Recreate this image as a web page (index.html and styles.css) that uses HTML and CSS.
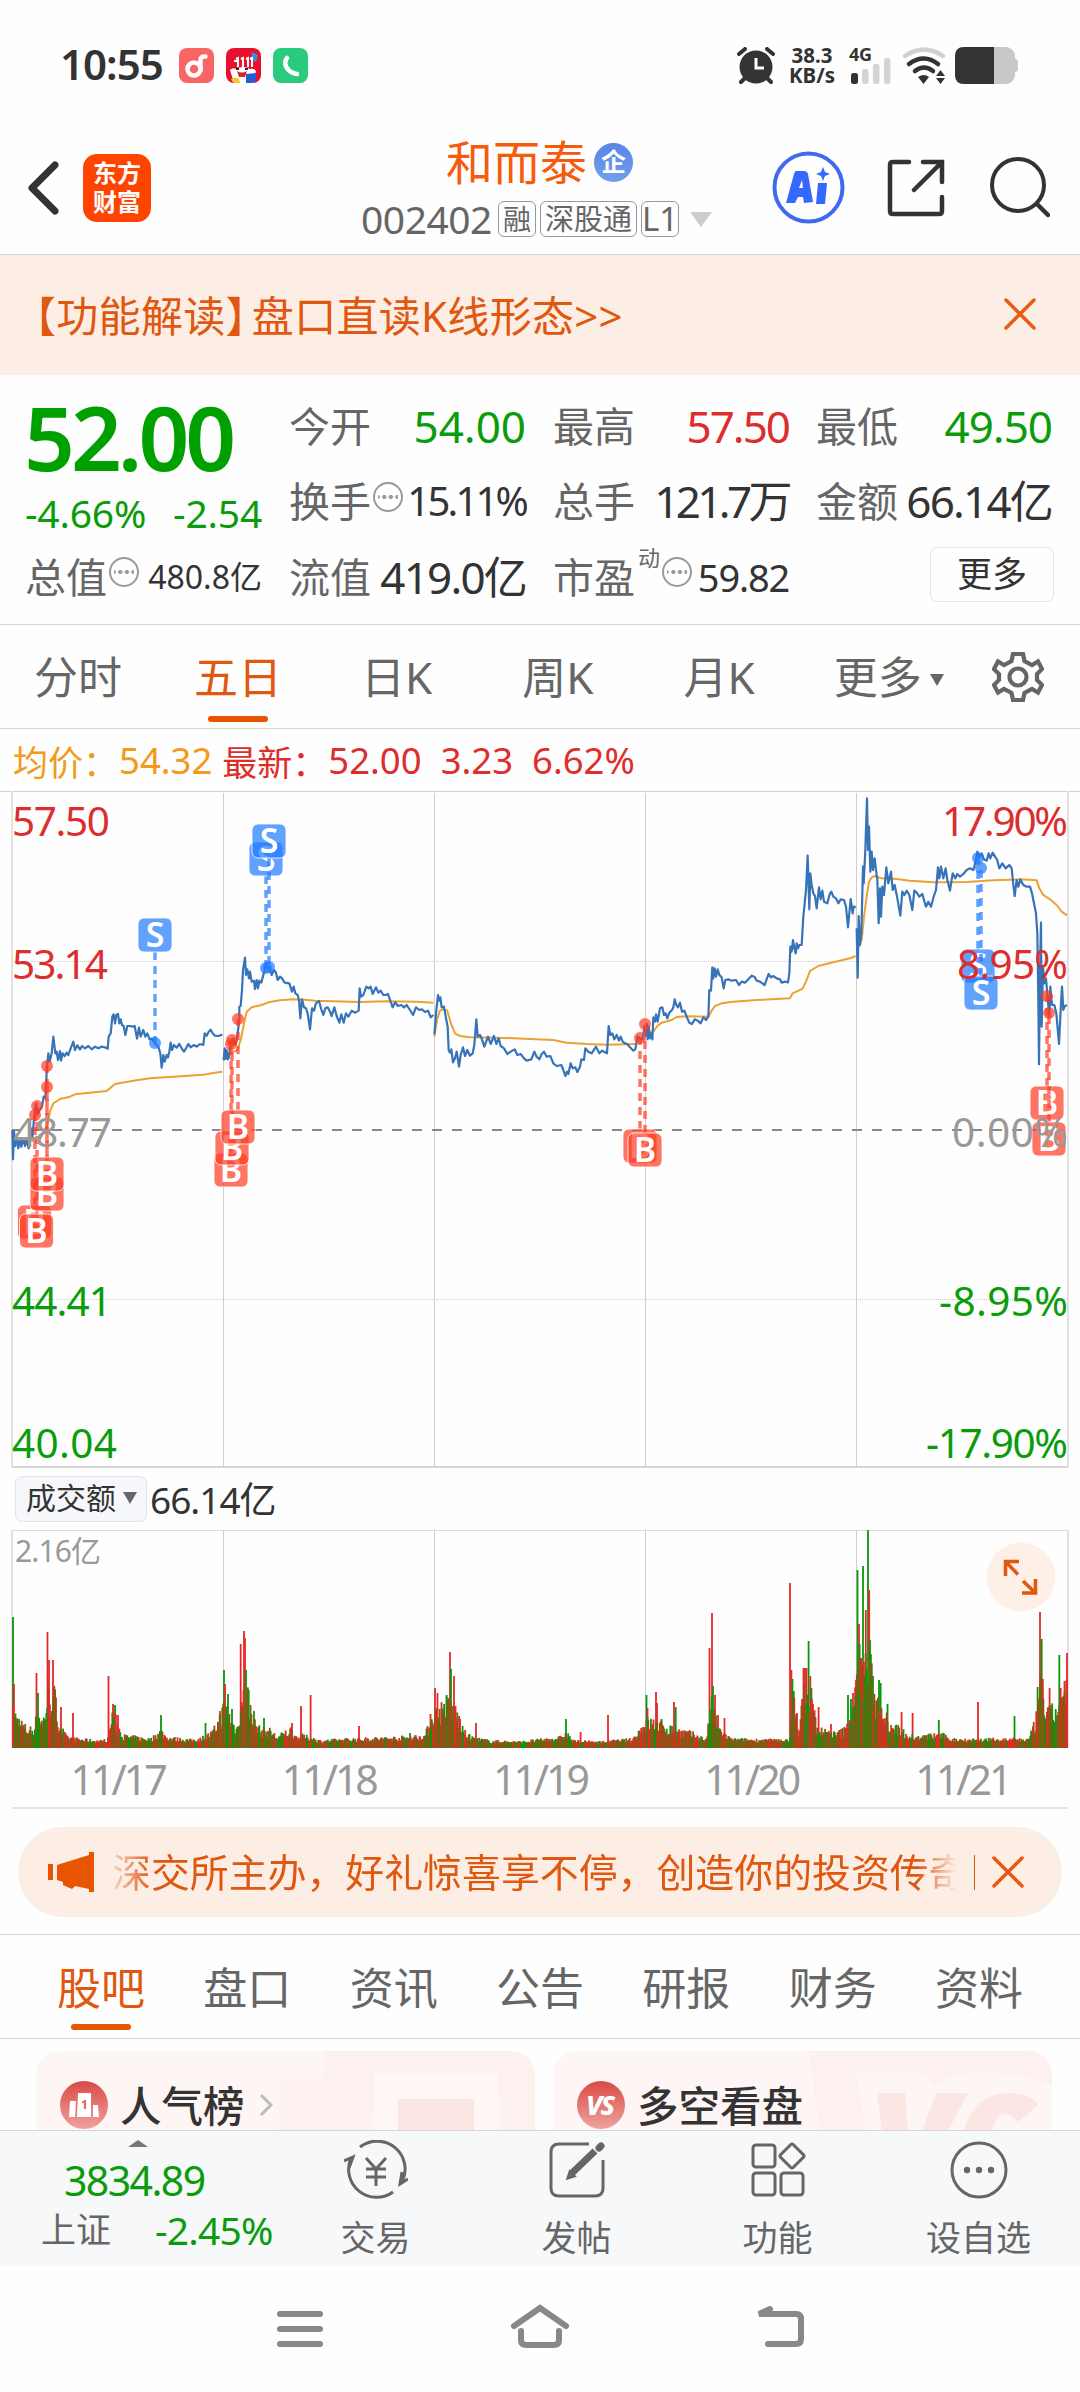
FILE: index.html
```html
<!DOCTYPE html>
<html lang="zh-CN">
<head>
    <meta charset="UTF-8">
    <meta name="viewport" content="width=device-width, initial-scale=1.0">
    <title>和而泰 002402</title>
    <link rel="stylesheet" href="styles.css">
</head>
<body>
    <div class="status">
        <span class="clock">10:55</span>
        <svg class="app" viewBox="0 0 35 35"><rect width="35" height="35" rx="8" fill="#f96465"/><circle cx="15" cy="21" r="6.500" fill="none" stroke="#fff" stroke-width="4.500"/><path d="M21.500 22V12q0-4 5-3.500" fill="none" stroke="#fff" stroke-width="4.500" stroke-linecap="round"/></svg>
        <svg class="app" viewBox="0 0 35 35"><rect width="35" height="35" rx="8" fill="#e8112d"/><path d="M26 4l6 3-2 7-5-2z" fill="#3c8bdc"/><path d="M10 11l2-1v9M15 11l2-1v9M20 11l2-1v9M24 11l2-1v9M8 13h3" stroke="#fff" stroke-width="2" fill="none"/><path d="M4 22q3-3 6-1 7-4 14 0 4-1 6 2l-3 12H8z" fill="#fff"/><path d="M11 23q5 3 10 0l-2 6h-6z" fill="#d5232c"/><path d="M10 21h3M19 21h3" stroke="#333" stroke-width="2"/><path d="M5 31q5-3 8 0l1 4H9q-3-1-4-4z" fill="#f7c72c"/><path d="M20 26l10-1v8l-4 2h-6z" fill="#1f60d6"/></svg>
        <svg class="app" viewBox="0 0 35 35"><rect width="35" height="35" rx="8" fill="#2bcb7e"/><path d="M14 10c-4 5-1 14 10 16" fill="none" stroke="#fff" stroke-width="4.500" stroke-linecap="round"/></svg>
        <svg class="alarm" viewBox="0 0 38 37"><circle cx="19" cy="20" r="16.500" fill="#333"/><path d="M2 7l6-5M36 7l-6-5M4 35l5-5M34 35l-5-5" stroke="#333" stroke-width="4" stroke-linecap="round"/><path d="M19 11v10h8" stroke="#fff" stroke-width="3" fill="none"/></svg>
        <div class="speed"><b>38.3</b><b>KB/s</b></div>
        <svg class="signal" viewBox="0 0 43 37"><text x="0" y="14" font-size="18" font-weight="bold" fill="#333" textLength="23">4G</text><rect x="2" y="26" width="7" height="11" rx="2.500" fill="#333"/><g fill="#d4d4d4"><rect x="13" y="22" width="6.500" height="15" rx="2.500"/><rect x="24" y="17" width="6.500" height="20" rx="2.500"/><rect x="35" y="11" width="6.500" height="26" rx="2.500"/></g></svg>
        <svg class="wifi" viewBox="0 0 44 37"><g fill="none" stroke-width="4.500" stroke-linecap="round"><path d="M3 9q19-13 38 0" stroke="#d0d0d0"/><path d="M7 17q15-11 29 0M13 24q9-7 18 0" stroke="#333"/></g><path d="M16 30q6-4 11 0l-5.500 7zM34 29l4.500-6 4.500 6zM34 31h9l-4.500 6z" fill="#333"/></svg>
        <svg class="battery" viewBox="0 0 63 37"><path d="M60 12q3 0 3 4v6q0 3-3 3z" fill="#c8c8c8"/><rect width="60" height="37" rx="9" fill="#c8c8c8"/><path d="M9 0h30v37H9q-9 0-9-9V9q0-9 9-9z" fill="#333"/></svg>
    </div>

    <div class="header">
        <svg class="back" viewBox="0 0 32 54"><path d="M28 4L5 27l23 23" fill="none" stroke="#333" stroke-width="7" stroke-linecap="round" stroke-linejoin="round"/></svg>
        <div class="logo">东方<br>财富</div>
        <div class="title">
            <div class="name">和而泰<span class="qi">企</span></div>
            <div class="code">002402<span class="tag">融</span><span class="tag wide">深股通</span><span class="tag l1">L1</span><i class="tri"></i></div>
        </div>
        <svg class="ai" viewBox="0 0 73 73"><circle cx="36.500" cy="36.500" r="34" fill="none" stroke="#4169f0" stroke-width="4"/><path fill-rule="evenodd" d="M24 20h8q3 0 4 3l5 28-9 1-1-6h-5l-3 6h-9l8-29q1-3 2-3zM27 37h4l-1-8zM46 32h9l-2 21h-9zM51 16l2 5 5 2-5 2-2 5-2-5-5-2 5-2z" fill="#3568ff"/></svg>
        <svg class="share" viewBox="0 0 58 58"><path d="M22 3H6Q3 3 3 6v46q0 3 3 3h46q3 0 3-3V38M36 3h19v20M55 3L27 31" fill="none" stroke="#333" stroke-width="4.500" stroke-linecap="round"/></svg>
        <svg class="search" viewBox="0 0 60 62"><circle cx="28" cy="28" r="26" fill="none" stroke="#333" stroke-width="4"/><path d="M47 47l11 11" stroke="#333" stroke-width="4.500" stroke-linecap="round"/></svg>
    </div>

    <div class="banner">
        <span class="banner-text">【功能解读<span class="rb">】</span>盘口直读K线形态&gt;&gt;</span>
        <svg class="close" viewBox="0 0 32 32"><path d="M2 2l28 28M30 2L2 30"/></svg>
    </div>

    <div class="quote">
        <div class="now">
            <div class="price">52.00</div>
            <div class="change green"><span>-4.66%</span><span>-2.54</span></div>
        </div>
        <div class="cell"><label>今开</label><span class="green">54.00</span></div>
        <div class="cell"><label>最高</label><span class="red high">57.50</span></div>
        <div class="cell"><label>最低</label><span class="green low">49.50</span></div>
        <div class="cell"><label>换手<i class="more"></i></label><span class="s40">15.11%</span></div>
        <div class="cell"><label>总手</label><span class="hand">121.7万</span></div>
        <div class="cell"><label>金额</label><span class="tight">66.14亿</span></div>
        <div class="cell"><label>总值<i class="more"></i></label><span class="s32">480.8亿</span></div>
        <div class="cell"><label>流值</label><span class="tight">419.0亿</span></div>
        <div class="cell"><label>市盈<sup>动</sup><i class="more"></i></label><span class="s38">59.82</span></div>
        <div class="cell"><span class="btn">更多</span></div>
    </div>

    <div class="tabs">
        <span>分时</span><span class="on">五日</span><span class="wide">日K</span><span class="wide">周K</span><span>月K</span><span class="drop">更多<i class="tri dark"></i></span>
        <svg class="gear" viewBox="-26 -26 52 52"><path d="M-5-23H5l1.500 7L14-12l6-3.500 4 7.500-5 5v6l5 5-4 7.500-6-3.500-7.500 4L5 23H-5l-1.500-7-7.500-4-6 3.500-4-7.500 5-5v-6l-5-5 4-7.500 6 3.500 7.500-4z"/><circle r="8.500"/></svg>
    </div>

    <div class="legend"><span class="avg">均价：</span><b class="avg n1">54.32</b><span>最新：</span><b class="n2">52.00</b><b class="n3">3.23</b><b>6.62%</b></div>

    <svg class="chart" viewBox="0 791 1080 677">
        <g class="grid">
            <path d="M0 791.500H1080" stroke="#d0d0d0"/>
            <path d="M12 791V1467M1068 791V1467" stroke="#e2e2e2" stroke-width="2"/>
            <path d="M223.500 793V1467M434.500 793V1467M645.500 793V1467M856.500 793V1467" stroke="#cfcfcf"/>
            <path d="M12 1467H1068" stroke="#d5d5d5" stroke-width="2"/>
            <path d="M12 961.500H1068M12 1299.500H1068" stroke="#ccc" stroke-dasharray="1 1"/>
            <path d="M12 1130H1064" stroke="#888" stroke-width="2" stroke-dasharray="10 10"/>
        </g>
        <!-- 11/17, 11/18 -->
        <g transform="translate(0 770) scale(.33333)">
            <polyline class="ma" points="37,1110 100,1112 118,1110 130,1090 143,1060 150,1025 160,1000 180,987 210,980 225,973 320,963 345,942 400,932 450,925 520,920 610,914 640,909 667,905"/>
            <polyline class="ma" points="671,873 676,855 690,850 712,840 722,810 732,760 740,725 755,712 785,705 805,697 840,691 880,688 915,689 945,692 1080,696 1160,694 1250,695 1300,698"/>
            <polyline class="px" points="37,1080 39,1168 42,1085 46,1128 50,1100 55,1135 60,1110 64,1130 70,1105 75,1128 80,1110 86,1135 92,1075 97,1100 103,1040 108,1000 115,1030 120,1018 126,1010 131,980 136,985 141,888 145,850 149,875 155,850 160,800 166,850 170,845 174,870 180,843 183,872 188,850 194,858 200,848 205,855 212,835 220,815 225,840 232,826 240,838 246,828 255,835 265,828 275,838 285,830 295,835 305,830 315,832 323,836 326,800 332,790 337,740 341,733 345,760 349,735 354,732 358,760 362,748 366,765 371,768 376,795 382,768 390,768 397,770 404,768 411,806 417,773 422,800 430,780 436,800 442,790 449,808 456,806 465,820 475,830 481,850 485,893 490,855 494,875 500,855 504,862 508,845 512,818 516,840 522,825 530,833 538,822 545,835 552,845 558,835 565,822 572,832 582,825 590,830 600,822 610,825 614,790 620,797 626,785 632,779 638,790 645,797 655,798 667,794"/>
            <polyline class="px" points="671,870 674,835 677,866 680,840 683,868 686,865 692,818 700,805 706,825 712,800 718,748 718,710 722,708 726,660 729,600 735,563 738,615 742,598 747,625 750,605 755,635 762,632 765,657 770,630 774,655 778,632 784,638 790,615 797,590 808,592 815,615 822,600 828,608 833,630 840,620 846,625 854,638 868,640 876,665 881,650 886,670 893,675 897,690 901,745 906,688 912,712 918,715 923,730 930,778 936,715 942,722 948,700 957,693 963,715 970,735 976,715 983,712 990,725 995,738 1003,712 1010,738 1018,758 1024,733 1031,758 1038,730 1045,740 1055,722 1066,728 1076,722 1079,655 1083,680 1090,675 1099,650 1106,655 1112,650 1118,672 1128,652 1135,668 1142,662 1150,675 1157,675 1164,672 1170,690 1178,712 1186,697 1194,708 1204,705 1212,712 1220,705 1230,720 1239,735 1248,712 1258,720 1266,718 1275,726 1284,722 1292,742 1300,735"/>
        </g>
        <!-- 11/19, 11/20 -->
        <g transform="translate(420 770) scale(.33333)">
            <polyline class="ma" points="43,800 52,745 60,722 70,718 82,722 92,758 105,790 120,798 150,802 230,803 330,807 400,810 440,818 500,822 560,824 650,822"/>
            <polyline class="ma" points="677,790 700,785 712,768 725,758 755,750 770,741 800,739 865,740 875,722 885,708 905,700 940,695 1010,690 1110,685 1118,670 1148,656 1158,635 1170,603 1195,588 1240,577 1290,565 1307,558"/>
            <polyline class="px" points="43,793 48,730 54,675 57,692 61,682 65,712 72,710 78,745 83,770 86,840 90,848 94,838 99,877 105,865 110,845 117,890 122,855 129,832 135,858 142,840 150,857 158,850 163,825 169,748 173,800 180,795 186,808 193,830 204,800 212,822 222,798 229,822 236,805 242,828 252,835 262,852 272,845 284,838 292,855 302,852 312,865 320,872 334,868 343,845 350,860 358,868 365,852 372,845 380,860 391,858 400,880 410,888 424,885 430,900 436,918 441,905 445,912 452,880 458,895 466,892 472,906 480,890 484,868 492,870 496,835 505,845 515,850 528,830 538,850 546,842 561,850 566,768 571,795 577,790 583,808 590,795 597,812 602,800 608,815 615,820 622,822 630,832 640,842 646,838 653,800 660,805 668,808 674,765"/>
            <polyline class="px" points="677,800 681,762 683,808 686,770 690,805 694,790 697,808 700,742 705,755 708,733 713,755 720,715 727,712 732,735 737,730 742,745 748,728 756,720 760,712 764,688 769,705 774,712 780,698 786,725 793,722 802,745 808,758 816,762 824,748 833,752 842,760 850,742 858,750 865,740 868,660 873,662 877,592 880,625 884,595 888,620 893,598 898,615 905,622 911,655 916,630 925,628 935,632 948,630 957,645 965,635 975,638 985,628 995,617 1003,620 1010,632 1020,635 1034,645 1046,612 1053,622 1060,618 1070,625 1080,628 1085,638 1095,635 1104,637 1108,610 1111,530 1115,545 1119,510 1123,535 1127,550 1130,520 1134,535 1138,525 1145,525 1150,440 1158,360 1163,257 1168,418 1171,310 1175,345 1180,370 1185,378 1190,415 1197,352 1202,388 1207,362 1212,395 1222,400 1230,370 1234,365 1240,380 1248,385 1255,400 1262,388 1272,390 1278,410 1284,472 1292,387 1298,430 1301,410 1307,412"/>
        </g>
        <!-- 11/21 -->
        <g transform="translate(760 770) scale(.33333)">
            <polyline class="ma" points="291,540 305,510 312,440 320,380 327,335 335,322 345,318 365,325 410,327 450,332 520,337 620,336 700,331 780,328 830,331 838,355 850,375 870,388 890,405 905,425 921,436"/>
            <polyline class="px" points="290,475 293,623 296,438 300,525 304,490 309,290 311,340 316,240 321,85 324,240 327,170 331,305 335,245 339,300 344,265 348,300 352,330 356,460 360,355 363,440 367,350 372,375 379,292 385,340 393,305 398,360 404,345 412,385 421,437 427,365 433,375 440,362 448,375 457,420 463,362 470,368 478,380 487,372 492,390 498,410 505,395 513,410 521,380 528,360 534,292 538,325 543,290 550,325 557,295 562,330 570,362 578,310 586,325 592,312 600,320 610,312 620,300 630,295 640,300 648,270 652,245 658,262 665,250 672,268 680,272 686,250 691,265 698,248 705,260 711,268 718,295 727,280 737,295 748,285 755,295 760,345 764,378 770,330 775,350 781,328 790,345 800,350 810,350 816,370 822,400 828,430 832,490 835,690 837,883 840,600 843,458 845,770 849,590 853,640 858,625 861,660 868,740 871,650 876,705 883,705 889,730 897,822 902,720 906,650 910,720 914,708 921,706"/>
        </g>
        <g id="marks"></g>
        <g class="axis">
            <text class="up" x="12" y="836" textLength="98">57.50</text>
            <text class="up" x="12" y="979" textLength="96">53.14</text>
            <text class="flat" x="13" y="1147" textLength="99">48.77</text>
            <text class="down" x="12" y="1316" textLength="100">44.41</text>
            <text class="down" x="12" y="1458" textLength="105">40.04</text>
            <text class="up" x="942" y="836" textLength="126">17.90%</text>
            <text class="up" x="957" y="979" textLength="111">8.95%</text>
            <text class="flat" x="952" y="1147" textLength="116">0.00%</text>
            <text class="down" x="939" y="1316" textLength="129">-8.95%</text>
            <text class="down" x="926" y="1458" textLength="142">-17.90%</text>
        </g>
    </svg>

    <div class="vol-head"><span class="pill">成交额<i class="tri dark"></i></span><span class="amount">66.14亿</span></div>

    <div class="vol">
        <svg viewBox="0 1530 1080 219">
            <g class="grid">
                <path d="M12 1530.500H1068" stroke="#ddd"/>
                <path d="M12 1530V1748M1068 1530V1748" stroke="#e2e2e2" stroke-width="2"/>
                <path d="M223.500 1530V1748M434.500 1530V1748M645.500 1530V1748M856.500 1530V1748" stroke="#cfcfcf"/>
            </g>
            <text class="flat" x="15" y="1562" font-size="30" textLength="86">2.16亿</text>
            <g id="bars"></g>
        </svg>
        <svg class="expand" viewBox="0 0 70 70"><circle cx="35" cy="35" r="34.500" fill="#fef0e7"/><path d="M33 19.500H19.500V34M19.500 19.500l12.500 13M36 51h13.500V37M49.500 51L37 39" fill="none" stroke="#e0570f" stroke-width="3.500"/></svg>
    </div>

    <div class="dates"><span>11/17</span><span>11/18</span><span>11/19</span><span>11/20</span><span>11/21</span></div>

    <div class="ticker">
        <svg class="horn" viewBox="0 0 46 40"><path d="M0 12h5v16H0zM9 13L41 3V0h5v40h-5v-3l-14-3-3 3-9-4v-3l-6-2z" fill="#e85500"/></svg>
        <span class="ticker-text">深交所主办，好礼惊喜享不停，创造你的投资传奇</span>
        <i class="bar"></i>
        <svg class="close" viewBox="0 0 32 32"><path d="M2 2l28 28M30 2L2 30"/></svg>
    </div>

    <div class="subtabs">
        <span class="on">股吧</span><span>盘口</span><span>资讯</span><span>公告</span><span>研报</span><span>财务</span><span>资料</span>
    </div>

    <div class="cards">
        <div class="card">
            <svg class="deco" viewBox="0 0 260 80"><path d="M50 0H260v80H4V29h44z" fill="#fdf1ef"/><path d="M100 22H223l3 58H97z" fill="#fef7f5"/><path d="M123 48h76v32h-76z" fill="#fbe6e4"/></svg>
            <svg class="ico" viewBox="0 0 48 48"><circle cx="24" cy="24" r="24" fill="url(#rd)"/><path d="M10 20h6l-1 16H9zM18 12h13v24H17zM33 24h5l1 12h-6z" fill="#fff"/><text x="21" y="28" font-size="12" font-weight="bold" fill="#e2605a">1</text></svg>
            <span>人气榜</span>
            <svg class="chev" viewBox="0 0 14 24"><path d="M2 2l10 10L2 22" fill="none" stroke="#bbb" stroke-width="3"/></svg>
        </div>
        <div class="card">
            <svg class="deco" viewBox="0 0 260 80"><path d="M17 0H260v80H28z" fill="#fdf1ef"/><path d="M64 22h70l8 12q40-26 118 0v46H74z" fill="#fef6f4"/><path d="M85 42h28l3 38H90zM130 80l14-38h32l-20 38zM172 80q10-38 45-38 22 0 29 12l-20 17q-18-20-26 9z" fill="#fbe6e4"/></svg>
            <svg class="ico" viewBox="0 0 48 48"><circle cx="24" cy="24" r="24" fill="url(#rd)"/><text x="9" y="34" font-size="27" font-weight="800" font-style="italic" fill="#fff" textLength="29">VS</text></svg>
            <span>多空看盘</span>
        </div>
    </div>
    <svg class="defs" width="0" height="0"><linearGradient id="rd" x2="0" y2="1"><stop stop-color="#d94b46"/><stop offset="1" stop-color="#f0a29d"/></linearGradient></svg>

    <div class="bottom">
        <div class="index">
            <i class="up-tri"></i>
            <div class="point green">3834.89</div>
            <div class="pct"><span>上证</span><span class="green">-2.45%</span></div>
        </div>
        <div class="item">
            <svg viewBox="-32 -30 64 60"><path d="M-16-23A28 28 0 0 1 26 12M17 22A28 28 0 0 1-25-12M-32-9l9-4-4 11M32 9l-8 5 2-12M-10-12L0-1l10-11M0-1v17M-10-1h20M-10 7h20"/></svg>
            <span>交易</span>
        </div>
        <div class="item">
            <svg viewBox="-32 -30 64 60"><path d="M12-26H-18q-8 0-8 8v36q0 8 8 8h36q8 0 8-8V-10"/><path d="M-6 4l24-23" stroke-width="7"/><path d="M22-22l2-2" stroke-width="7" stroke-linecap="round"/><path d="M-9 8l2-6 4 4z"/></svg>
            <span>发帖</span>
        </div>
        <div class="item">
            <svg viewBox="-32 -30 64 60"><rect x="-25" y="-25" width="22" height="22" rx="3"/><rect x="-25" y="3" width="22" height="22" rx="3"/><rect x="3" y="3" width="22" height="22" rx="3"/><rect x="5" y="-23" width="18" height="18" rx="2" transform="rotate(45 14 -14)"/></svg>
            <span>功能</span>
        </div>
        <div class="item">
            <svg viewBox="-32 -30 64 60"><circle r="27"/><g fill="#666" stroke="none"><circle cx="-12" r="3.200"/><circle r="3.200"/><circle cx="12" r="3.200"/></g></svg>
            <span>设自选</span>
        </div>
    </div>

    <div class="sysnav">
        <svg viewBox="-32 -30 64 60"><path d="M-20-15h40M-20 0h40M-20 15h40"/></svg>
        <svg viewBox="-32 -30 64 60"><path d="M-26-3L0-21 26-3M-19 2v9q0 5 5 5h28q5 0 5-5V2"/></svg>
        <svg viewBox="-32 -30 64 60"><path d="M-10-20l-11 5h37q5 0 5 5v20q0 5-5 5h-28"/></svg>
    </div>

    <script src="script.js"></script>
</body>
</html>
```
FILE: styles.css
```css
body {
    margin: 0;
    width: 1080px;
    height: 2392px;
    overflow: hidden;
    background: #fefefe;
    color: #333;
    font-family: "Noto Sans", "Noto Sans CJK SC", sans-serif;
}
svg {
    display: block;
    flex: none;
}
i {
    font-style: normal;
}
.green {
    color: #0a9c0a;
}
.red {
    color: #dd2d2d;
}
.tri {
    display: inline-block;
    border: 11px solid transparent;
    border-top: 15px solid #ccc;
    border-bottom: 0;
}
.tri.dark {
    border-width: 12px 7.5px 0;
    border-top-color: #666;
}

/* status bar */
.status {
    display: flex;
    align-items: center;
    height: 110px;
    padding: 20px 0 0 60px;
    box-sizing: border-box;
}
.clock {
    width: 119px;
    font-size: 42px;
    font-weight: 600;
    letter-spacing: -1px;
    line-height: 40px;
    padding-bottom: 2px;
}
.app {
    width: 35px;
    height: 35px;
    margin-right: 12px;
}
.alarm {
    width: 38px;
    height: 37px;
    margin-left: 417px;
}
.speed {
    display: flex;
    flex-direction: column;
    width: 48px;
    margin-left: 13px;
    font-size: 20.5px;
    line-height: 20px;
    text-align: center;
}
.signal {
    width: 43px;
    height: 37px;
    margin-left: 13px;
    overflow: visible;
}
.wifi {
    width: 44px;
    height: 37px;
    margin-left: 10px;
}
.battery {
    width: 63px;
    height: 37px;
    margin-left: 9px;
}

/* header */
.header {
    display: flex;
    align-items: center;
    height: 145px;
    padding: 11px 28px 0 27px;
    box-sizing: border-box;
    border-bottom: 1px solid #d5d5d5;
}
.header .back {
    width: 32px;
    height: 54px;
}
.logo {
    width: 68px;
    height: 68px;
    margin-left: 24px;
    padding-top: 4px;
    box-sizing: border-box;
    border-radius: 14px;
    background: #ff4400;
    color: #fff;
    font-size: 24px;
    font-weight: bold;
    line-height: 29px;
    text-align: center;
}
.title {
    flex: 1;
    display: flex;
    flex-direction: column;
    align-items: center;
    padding: 7px 0 0 152px;
}
.name {
    display: flex;
    align-items: center;
    height: 56px;
    padding-left: 4px;
    font-size: 47px;
    line-height: 56px;
    color: #f75a0b;
}
.qi {
    width: 39px;
    height: 39px;
    margin-left: 7px;
    border-radius: 50%;
    background: linear-gradient(#5a85e6, #719eea);
    color: #fff;
    font-size: 25px;
    font-weight: bold;
    line-height: 37px;
    text-align: center;
}
.code {
    display: flex;
    align-items: center;
    height: 58px;
    margin-left: -2px;
    font-size: 39px;
    line-height: 58px;
    letter-spacing: -0.5px;
    color: #666;
}
.tag {
    width: 36px;
    height: 34px;
    margin-left: 6px;
    border: 1px solid #999;
    border-radius: 6px;
    font-size: 28px;
    line-height: 34px;
    letter-spacing: 0;
    text-align: center;
}
.tag.wide {
    width: 95px;
    margin-left: 4px;
    font-size: 29px;
}
.tag.l1 {
    margin-left: 4px;
    font-size: 33px;
}
.code .tri {
    margin-left: 11px;
}
.ai {
    width: 73px;
    height: 73px;
    margin-right: 41px;
}
.share {
    width: 60px;
    height: 58px;
    margin-right: 44px;
}
.search {
    width: 60px;
    height: 62px;
    margin-right: 2px;
}

/* banner */
.banner {
    display: flex;
    align-items: center;
    justify-content: space-between;
    height: 120px;
    padding: 0 44px 3px 14px;
    box-sizing: border-box;
    background: #fceee4;
    color: #e0570f;
    font-size: 42px;
    letter-spacing: 0.3px;
}
.rb {
    margin-right: -16px;
}
.close {
    width: 32px;
    height: 32px;
    fill: none;
    stroke: #e85a10;
    stroke-width: 3.5;
    stroke-linecap: round;
}

/* quote */
.quote {
    display: grid;
    grid-template-columns: 237px 237px 236px 236px;
    grid-template-rows: repeat(3, 75.5px);
    column-gap: 27px;
    height: 250px;
    padding: 13px 26px 0 25px;
    box-sizing: border-box;
    border-bottom: 1px solid #d5d5d5;
    font-size: 44px;
}
.now {
    grid-row: span 2;
}
.price {
    height: 98px;
    margin-left: -1px;
    font-size: 89px;
    font-weight: 600;
    line-height: 98px;
    letter-spacing: -4px;
    color: #00a000;
}
.change {
    display: flex;
    justify-content: space-between;
    font-size: 39px;
    letter-spacing: -0.2px;
    line-height: 54px;
}
.cell {
    display: flex;
    align-items: center;
    justify-content: space-between;
    white-space: nowrap;
    line-height: 60px;
}
.cell label {
    display: flex;
    align-items: center;
    font-size: 41px;
    color: #666;
}
.cell sup {
    margin: -40px 0 0 3px;
    font-size: 22px;
    line-height: 24px;
}
.cell .more {
    width: 26px;
    height: 26px;
    margin: -9px 0 0 2px;
    border: 2px solid #999;
    border-radius: 50%;
    background: radial-gradient(circle, #999 1.8px, transparent 2.4px) 3px 0 / 6.6px 26px content-box;
    padding: 0 3px;
    box-sizing: border-box;
    width: 30px;
    height: 30px;
}
.high {
    letter-spacing: -2px;
}
.low {
    letter-spacing: -1px;
}
.s40 {
    font-size: 40px;
    letter-spacing: -2.8px;
}
.s38 {
    font-size: 38px;
    letter-spacing: -1.2px;
}
.s32 {
    font-size: 32px;
}
.tight {
    letter-spacing: -1.8px;
}
.hand {
    letter-spacing: -3.6px;
}
.btn {
    width: 122px;
    height: 53px;
    margin: -5px -2px 0 auto;
    border: 1px solid #e3e3e3;
    border-radius: 7px;
    font-size: 35px;
    line-height: 52px;
    text-align: center;
}

/* period tabs */
.tabs {
    display: flex;
    align-items: center;
    height: 104px;
    padding: 0 36px 0 34px;
    box-sizing: border-box;
    border-bottom: 1px solid #d5d5d5;
    color: #666;
    font-size: 44px;
    line-height: 102px;
}
.tabs > span {
    position: relative;
    margin-right: 72px;
}
.tabs > .on {
    margin-right: 79px;
}
.tabs > .wide {
    margin-right: 90px;
}
.tabs > .drop {
    margin: 0 auto 0 7px;
}
.drop .tri {
    margin-left: 8px;
    vertical-align: 8px;
}
.on,
.tabs .on {
    color: #e0570f;
}
.on::after {
    content: "";
    position: absolute;
    left: 50%;
    bottom: 6px;
    width: 60px;
    height: 6px;
    margin-left: -30px;
    border-radius: 3px;
    background: #e85500;
}
.gear {
    width: 52px;
    height: 52px;
    fill: none;
    stroke: #666;
    stroke-width: 4.2;
}

/* chart */
.legend {
    display: flex;
    align-items: center;
    height: 62px;
    padding: 0 0 0 13px;
    box-sizing: border-box;
    color: #dd2d2d;
    font-size: 35px;
    white-space: pre;
}
.legend b {
    font-size: 36.5px;
    font-weight: normal;
}
.legend .avg {
    color: #f29a1a;
}
.legend .n1 {
    margin-left: 1px;
    margin-right: 10px;
}
.legend .n2 {
    margin-left: 1px;
}
.legend .n2,
.legend .n3 {
    margin-right: 19px;
}
.chart {
    width: 1080px;
    height: 677px;
}
.ma,
.px {
    fill: none;
    stroke: #eca132;
    stroke-width: 6;
    stroke-linejoin: round;
}
.px {
    stroke: #3673b8;
    stroke-width: 6.6;
}
.axis {
    font-size: 40.5px;
}
.up {
    fill: #dd2d2d;
}
.down {
    fill: #0a9c0a;
}
.flat {
    fill: #999;
}

/* volume */
.vol-head {
    display: flex;
    align-items: center;
    height: 62px;
    padding-left: 15px;
}
.pill {
    display: flex;
    align-items: center;
    width: 132px;
    height: 46px;
    padding-left: 10px;
    box-sizing: border-box;
    border: 1px solid #e2e4e8;
    border-radius: 7px;
    background: #f6f7fa;
    font-size: 30px;
    line-height: 42px;
    padding-bottom: 3px;
}
.pill .tri {
    margin-left: 7px;
}
.amount {
    margin: -2px 0 0 3px;
    font-size: 37px;
    letter-spacing: -1px;
}
.vol {
    position: relative;
    height: 219px;
}
.expand {
    position: absolute;
    left: 986px;
    top: 12px;
    width: 70px;
    height: 70px;
}
.dates {
    display: grid;
    grid-template-columns: repeat(5, 1fr);
    height: 58px;
    margin: 0 12px;
    border-bottom: 2px solid #e2e2e2;
    color: #999;
    font-size: 41px;
    line-height: 60px;
    letter-spacing: -3px;
    text-align: center;
}

/* ticker */
.ticker {
    display: flex;
    align-items: center;
    height: 90px;
    margin: 18px 18px 17px;
    padding-left: 30px;
    box-sizing: border-box;
    border-radius: 45px;
    background: #fceee4;
    color: #e0570f;
}
.horn {
    width: 46px;
    height: 40px;
}
.ticker-text {
    width: 845px;
    margin: -5px 0 0 18px;
    overflow: hidden;
    white-space: nowrap;
    font-size: 38.9px;
    -webkit-mask-image: linear-gradient(90deg, rgba(0, 0, 0, 0.15), #000 40px, #000 805px, transparent);
    mask-image: linear-gradient(90deg, rgba(0, 0, 0, 0.15), #000 40px, #000 805px, transparent);
}
.bar {
    width: 1px;
    height: 35px;
    margin: 0 17px;
    background: #e0570f;
}

/* section tabs */
.subtabs {
    display: flex;
    justify-content: space-between;
    height: 105px;
    padding: 0 57px;
    box-sizing: border-box;
    border-top: 1px solid #d2d5d8;
    border-bottom: 1px solid #d2d5d8;
    color: #666;
    font-size: 44px;
    line-height: 106px;
}
.subtabs span {
    position: relative;
}
.subtabs .on::after {
    bottom: 8px;
}

/* cards */
.cards {
    display: flex;
    gap: 18px;
    height: 91px;
    padding: 12px 28px 0 36px;
    box-sizing: border-box;
    overflow: hidden;
}
.card {
    position: relative;
    display: flex;
    align-items: center;
    width: 499px;
    height: 150px;
    padding: 0 0 42px 24px;
    box-sizing: border-box;
    border-radius: 24px;
    background: #fef6f4;
    font-size: 41.5px;
    font-weight: 500;
}
.card span {
    position: relative;
    z-index: 1;
    margin: -3px 0 0 12px;
}
.ico {
    width: 48px;
    height: 48px;
}
.chev {
    width: 14px;
    height: 24px;
    margin-left: 14px;
    z-index: 1;
}
.deco {
    position: absolute;
    right: 0;
    top: 0;
    width: 260px;
    height: 80px;
    border-top-right-radius: 24px;
}
.defs {
    position: absolute;
}

/* bottom bar */
.bottom {
    display: flex;
    height: 136px;
    box-sizing: border-box;
    border-top: 1px solid #d2d8dc;
    background: #f6f8fa;
    color: #666;
}
.index {
    width: 275px;
}
.up-tri {
    display: block;
    width: 0;
    margin: 9px 0 0 128px;
    border: 10.5px solid transparent;
    border-bottom: 7px solid #777;
    border-top: 0;
}
.point {
    padding-left: 64px;
    height: 58px;
    font-size: 41px;
    line-height: 66px;
    letter-spacing: -1.6px;
}
.pct {
    display: flex;
    padding-left: 41px;
    font-size: 35px;
    line-height: 49px;
}
.pct .green {
    margin-left: 44px;
    font-size: 39px;
    letter-spacing: -0.8px;
}
.item {
    width: 201px;
    display: flex;
    flex-direction: column;
    align-items: center;
    padding-top: 9px;
    font-size: 35px;
}
.item svg {
    width: 64px;
    height: 60px;
    fill: none;
    stroke: #666;
    stroke-width: 3;
}
.item span {
    margin-top: 13px;
    line-height: 50px;
}

/* system navigation */
.sysnav {
    display: flex;
    justify-content: center;
    gap: 176px;
    padding-top: 33px;
}
.sysnav svg {
    width: 64px;
    height: 60px;
    fill: none;
    stroke: #888;
    stroke-width: 6;
    stroke-linecap: round;
}
```
FILE: script.js
```js
// buy / sell marks: type, dot x, dot y, badge centre x, badge centre y
const marks = [
    ['B', 35, 1115, 34.5, 1222],
    ['B', 37, 1106, 36.5, 1231],
    ['B', 47, 1087, 47, 1194],
    ['B', 47, 1066, 47, 1174],
    ['S', 155, 1043, 155, 935],
    ['S', 266, 968, 266, 859],
    ['S', 269, 967, 269, 841],
    ['B', 231, 1044, 231, 1170],
    ['B', 232, 1040, 232, 1148],
    ['B', 238, 1019, 238, 1127],
    ['B', 640, 1038, 640, 1146],
    ['B', 645, 1024, 645, 1150],
    ['S', 978, 858, 978, 966],
    ['S', 981, 868, 981, 993],
    ['B', 1047, 996, 1047, 1103],
    ['B', 1049, 1013, 1049, 1139]
];
document.getElementById('marks').innerHTML = marks.map(([t, x, y, bx, by]) => {
    const c = t === 'B' ? '#ff3b22' : '#1f7bff';
    const edge = by > y ? by - 17 : by + 17;
    return `<path d="M${x} ${edge}V${y}" stroke="${c}" stroke-opacity=".7" stroke-width="3.5" stroke-dasharray="8 6"/>
        <circle cx="${x}" cy="${y}" r="6" fill="${c}" fill-opacity=".7"/>
        <rect x="${bx - 17}" y="${by - 17}" width="34" height="34" rx="6" fill="${c}" fill-opacity=".7" stroke="#fff" stroke-opacity=".8"/>
        <text x="${bx}" y="${by + 12}" font-size="34" font-weight="600" text-anchor="middle" fill="#fff">${t}</text>`;
}).join('');

// volume: base level by x, then single bars
const base = [12,40,20,28,26,20,33,20,37,40,42,28,47,60,54,60,57,30,62,18,66,10,78,8,100,6,107,8,112,40,118,22,122,12,135,10,150,8,160,18,166,10,190,7,200,9,212,16,220,36,224,50,230,30,236,20,240,50,246,70,252,30,260,18,270,18,276,10,290,20,296,10,302,12,320,6,345,8,400,10,424,12,432,36,440,45,448,50,456,40,462,18,470,10,490,6,520,5,560,10,566,15,572,6,600,5,632,8,638,18,646,30,660,25,672,20,690,15,705,8,711,50,717,20,730,8,780,7,789,8,793,50,798,20,803,60,812,50,816,20,835,14,845,20,852,45,857,80,864,100,870,90,874,55,882,50,888,28,900,18,915,10,940,14,950,8,1010,8,1028,8,1035,30,1041,80,1045,40,1050,40,1058,45,1062,60,1068,70];
const peaks = 'g13,131 r14,64 r36.5,75 g38,55 r47.5,116 r49,88 r53,88 g54,61 r61,41 r73,35 r108.5,72 r113,44 g115,43 r118,33 g161,33 g205.5,25 r220,37 g224,78 r225,64 g228,54 g232,39 r240.7,104 r244,117 r245,110 g246,78 g248,50 g254,37 g264,30 r292,25 r301,42 r310.6,53 r359,22 g410,15 r430.5,34 r435,60 r437.5,55 g446.6,53 r450,96 g451,79 r454,72 r460,29 r476,25 g566,29 r580.6,16 r608,33 g646.5,53 r647.5,40 r656,56 r657,45 g661.5,29 r674,46 g675.7,41 r709.5,100 r712,135 g713,62 r715,53 r718,33 r724.5,30 r790,165 r791.4,78 g792.4,69 g793.8,57 r797,35 r802,49 r803.5,80 r805,80 r806.5,80 g808.6,107 r810.3,72 g811.4,60 r813,44 r818.6,41 r831,24 g848,53 g851,49 r853,55 r856,68 g857.5,178 r859,124 g859.6,104 r860.6,90 g863,182 r865.8,138 g868,218 r869.2,158 g870,108 r871,72 g873,72 g879,68 g880.6,65 g887.5,44 r901.6,36 r912.6,35 g938.8,28 r978,46 g1014.5,32 g1037.6,61 r1040,136 g1041.7,109 r1042.8,69 r1049.6,60 g1059.3,93 r1060.7,60 r1064.5,67 r1067,95';
const colors = { r: '#e62828', g: '#0a960a', m: '#8a5512' };
let seed = 7;
function rnd() {
    seed = (seed * 16807) % 2147483647;
    return seed / 2147483647;
}
function bar(x, h, c) {
    return `<rect x="${x.toFixed(1)}" y="${(1748 - h).toFixed(1)}" width="1.8" height="${h.toFixed(1)}" fill="${colors[c]}"/>`;
}
let out = peaks.split(' ').map(p => {
    const [x, h] = p.slice(1).split(',').map(Number);
    return bar(x - 0.9, h, p[0]);
}).join('');
let k = 0;
for (let x = 12; x < 1067; x += 0.88) {
    while (x > base[k + 2]) k += 2;
    const f = (x - base[k]) / (base[k + 2] - base[k]);
    const h = base[k + 1] + f * (base[k + 3] - base[k + 1]);
    const r = rnd();
    out += bar(x, h * (0.45 + 0.6 * rnd()) + 2, r < 0.3 ? 'r' : r < 0.6 ? 'g' : 'm');
}
document.getElementById('bars').innerHTML = out;
```
